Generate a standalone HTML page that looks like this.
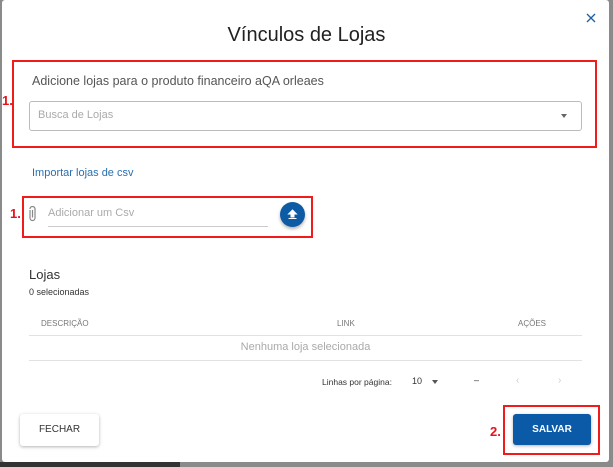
<!DOCTYPE html>
<html><head><style>
*{margin:0;padding:0;box-sizing:border-box}
body{width:613px;height:467px;overflow:hidden;background:#8a8a8a;font-family:"Liberation Sans",sans-serif;position:relative}
.a{position:absolute;white-space:nowrap}
.modal{position:absolute;left:2px;top:0;width:607px;height:462px;background:#fff;border-radius:3px}
.red{position:absolute;border:2px solid #f01c1c}
.lbl{color:#e8111a;font-weight:bold;font-size:13px}
.btn{position:absolute;border-radius:3px;font-size:10px;text-align:center;line-height:32px}
</style></head><body>
<div class="a" style="left:0;top:462px;width:180px;height:5px;background:#333"></div>
<div class="modal"></div>
<svg class="a" style="left:586px;top:13px" width="10" height="10" viewBox="0 0 10 10"><path d="M1 1L9 9M9 1L1 9" stroke="#1b5fa6" stroke-width="1.3"/></svg>
<div class="a" style="left:0;width:613px;top:24px;text-align:center;font-size:20px;color:#222">Vínculos de Lojas</div>
<div class="red" style="left:12px;top:60px;width:585px;height:88px"></div>
<div class="a lbl" style="left:2px;top:93px">1.</div>
<div class="a" style="left:32px;top:74px;font-size:12.5px;color:#555">Adicione lojas para o produto financeiro aQA orleaes</div>
<div class="a" style="left:29px;top:101px;width:553px;height:30px;border:1px solid #bbb;border-radius:3px"></div>
<div class="a" style="left:38px;top:109px;font-size:11px;color:#aaa">Busca de Lojas</div>
<div class="a" style="left:561px;top:114px;width:0;height:0;border-left:3.5px solid transparent;border-right:3.5px solid transparent;border-top:4px solid #666"></div>
<div class="a" style="left:32px;top:167px;font-size:11px;color:#2a6fb0">Importar lojas de csv</div>
<div class="red" style="left:22px;top:196px;width:291px;height:42px"></div>
<div class="a lbl" style="left:10px;top:206px">1.</div>
<svg class="a" style="left:28px;top:206px" width="9" height="16" viewBox="0 0 9 16"><path d="M4.5 4v7.5M2 4v8a2.5 2.5 0 0 0 5 0V3a2.5 2.5 0 0 0-5 0" fill="none" stroke="#888" stroke-width="1.2"/></svg>
<div class="a" style="left:48px;top:207px;font-size:11px;color:#aaa">Adicionar um Csv</div>
<div class="a" style="left:48px;top:226px;width:220px;height:1px;background:#ccc"></div>
<div class="a" style="left:280px;top:202px;width:25px;height:25px;border-radius:50%;background:#0d5aa5;box-shadow:0 2px 3px rgba(0,0,0,.3)"></div>
<svg class="a" style="left:287px;top:209px" width="11" height="11" viewBox="0 0 11 11"><path d="M5.5 1L1.5 5h2.5v3h3V5h2.5z M1.5 9.5h8" fill="#fff" stroke="#fff" stroke-width="1"/></svg>
<div class="a" style="left:29px;top:267px;font-size:13px;color:#333">Lojas</div>
<div class="a" style="left:29px;top:287px;font-size:9px;color:#333">0 selecionadas</div>
<div class="a" style="left:41px;top:319px;font-size:8px;color:#777">DESCRIÇÃO</div>
<div class="a" style="left:337px;top:319px;font-size:8px;color:#777">LINK</div>
<div class="a" style="left:518px;top:319px;font-size:8px;color:#777">AÇÕES</div>
<div class="a" style="left:29px;top:335px;width:553px;height:1px;background:#e2e2e2"></div>
<div class="a" style="left:29px;top:341px;width:553px;text-align:center;font-size:11px;color:#aaa">Nenhuma loja selecionada</div>
<div class="a" style="left:29px;top:360px;width:553px;height:1px;background:#e2e2e2"></div>
<div class="a" style="left:322px;top:377px;font-size:8.5px;color:#333">Linhas por página:</div>
<div class="a" style="left:412px;top:376px;font-size:9px;color:#333">10</div>
<div class="a" style="left:432px;top:380px;width:0;height:0;border-left:3.5px solid transparent;border-right:3.5px solid transparent;border-top:4px solid #555"></div>
<div class="a" style="left:474px;top:375px;font-size:9px;color:#333">–</div>
<div class="a" style="left:516px;top:375px;font-size:10px;color:#ccc">‹</div>
<div class="a" style="left:558px;top:375px;font-size:10px;color:#ccc">›</div>
<div class="btn" style="left:20px;top:414px;width:79px;height:32px;background:#fff;color:#333;box-shadow:0 1px 3px rgba(0,0,0,.3)">FECHAR</div>
<div class="red" style="left:503px;top:405px;width:97px;height:50px"></div>
<div class="a lbl" style="left:490px;top:424px">2.</div>
<div class="btn" style="left:513px;top:414px;width:78px;height:31px;background:#0a5aa8;color:#fff;font-weight:bold;line-height:31px;box-shadow:0 1px 3px rgba(0,0,0,.3)">SALVAR</div>
</body></html>
